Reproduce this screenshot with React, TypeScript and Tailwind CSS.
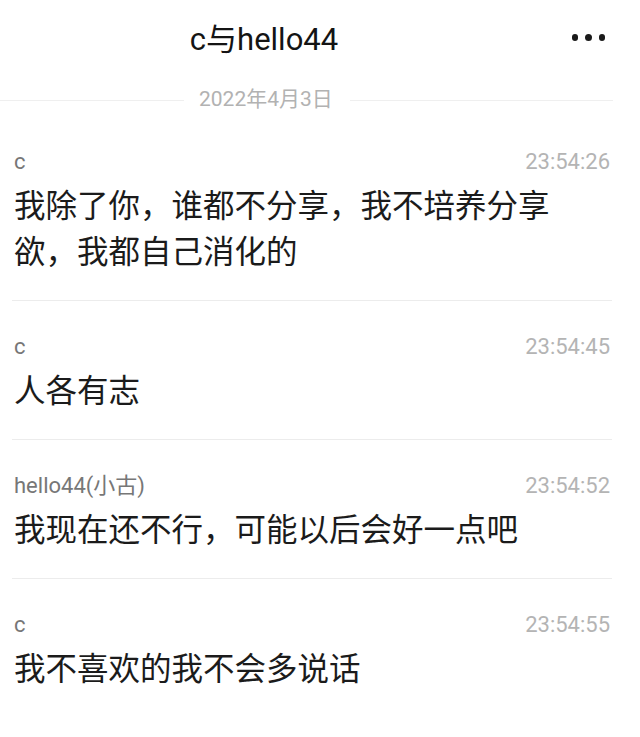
import React from "react";

interface Message {
  id: number;
  name: string;
  time: string;
  text: string;
}

const messages: Message[] = [
  { id: 1, name: "c", time: "23:54:26", text: "我除了你，谁都不分享，我不培养分享欲，我都自己消化的" },
  { id: 2, name: "c", time: "23:54:45", text: "人各有志" },
  { id: 3, name: "hello44(小古)", time: "23:54:52", text: "我现在还不行，可能以后会好一点吧" },
  { id: 4, name: "c", time: "23:54:55", text: "我不喜欢的我不会多说话" },
];

const font = { fontFamily: '"Roboto", "Noto Sans CJK SC", sans-serif' };

const MessageItem: React.FC<{ msg: Message; last: boolean }> = ({ msg, last }) => {
  return (
    <div className={`pt-[31px] pb-[24px] ${last ? "" : "border-b border-[#ececec]"}`}>
      <div className="flex h-[28px] items-center justify-between pl-[2px] pr-[2px] text-[22px]">
        <span className="text-[#777777]">{msg.name}</span>
        <span className="text-[#b4b4b4]">{msg.time}</span>
      </div>
      <p className="mt-[9px] max-w-[552px] pl-[2px] text-[31.5px] leading-[46px] text-[#1b1b1b]">
        {msg.text}
      </p>
    </div>
  );
};

const App: React.FC = () => {
  return (
    <div className="h-[737px] w-[640px] overflow-hidden bg-white" style={font}>
      <header className="relative flex h-[84px] items-center justify-center pb-1 pr-[112px]">
        <h1 className="text-[31px] text-[#141414]">c与hello44</h1>
        <div className="absolute right-[35px] top-[34px] flex gap-[7px]">
          <span className="h-[6.5px] w-[6.5px] rounded-full bg-[#1a1a1a]" />
          <span className="h-[6.5px] w-[6.5px] rounded-full bg-[#1a1a1a]" />
          <span className="h-[6.5px] w-[6.5px] rounded-full bg-[#1a1a1a]" />
        </div>
      </header>

      <div className="flex h-[32px] items-center pr-[27px]">
        <div className="h-px w-[184px] bg-[#efefef]" />
        <span className="ml-[15px] mr-[17px] text-[21px] text-[#b2b2b2]">2022年4月3日</span>
        <div className="h-px flex-1 bg-[#efefef]" />
      </div>

      <div className="ml-[12px] mr-[28px]">
        {messages.map((m, i) => (
          <MessageItem key={m.id} msg={m} last={i === messages.length - 1} />
        ))}
      </div>
    </div>
  );
};

export default App;
